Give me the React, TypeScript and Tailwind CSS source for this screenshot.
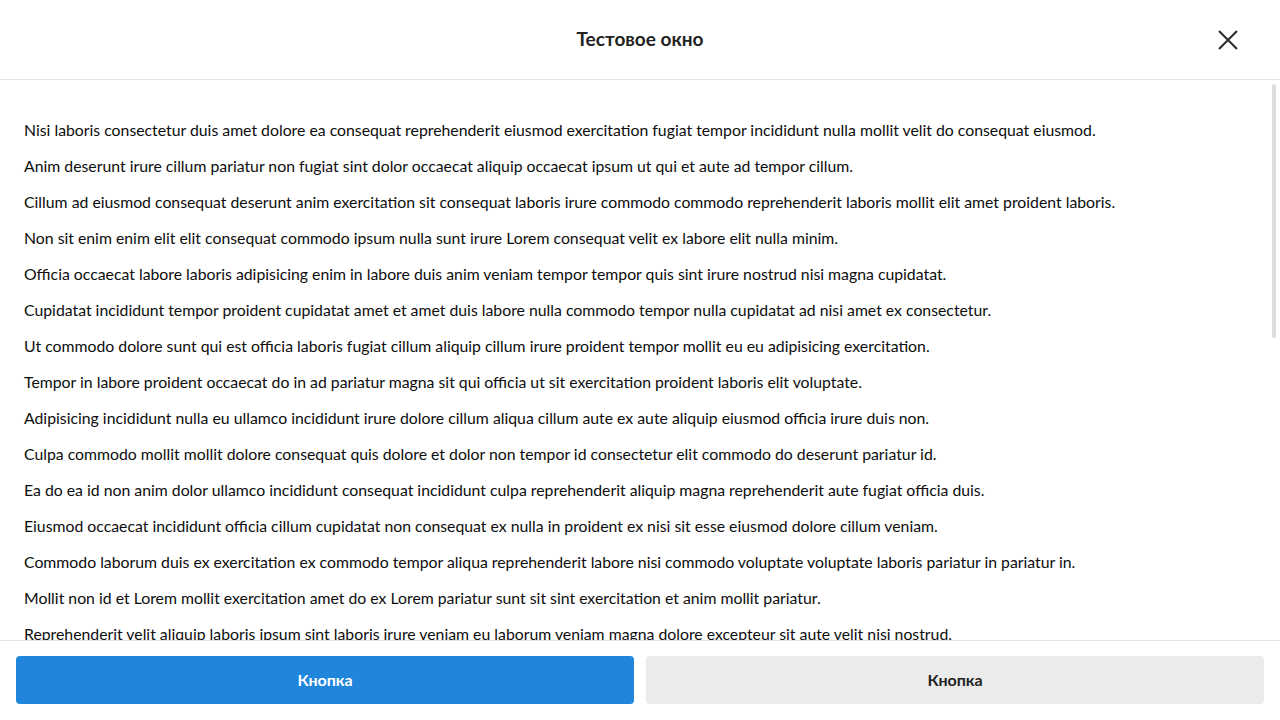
const lines = [
  'Nisi laboris consectetur duis amet dolore ea consequat reprehenderit eiusmod exercitation fugiat tempor incididunt nulla mollit velit do consequat eiusmod.',
  'Anim deserunt irure cillum pariatur non fugiat sint dolor occaecat aliquip occaecat ipsum ut qui et aute ad tempor cillum.',
  'Cillum ad eiusmod consequat deserunt anim exercitation sit consequat laboris irure commodo commodo reprehenderit laboris mollit elit amet proident laboris.',
  'Non sit enim enim elit elit consequat commodo ipsum nulla sunt irure Lorem consequat velit ex labore elit nulla minim.',
  'Officia occaecat labore laboris adipisicing enim in labore duis anim veniam tempor tempor quis sint irure nostrud nisi magna cupidatat.',
  'Cupidatat incididunt tempor proident cupidatat amet et amet duis labore nulla commodo tempor nulla cupidatat ad nisi amet ex consectetur.',
  'Ut commodo dolore sunt qui est officia laboris fugiat cillum aliquip cillum irure proident tempor mollit eu eu adipisicing exercitation.',
  'Tempor in labore proident occaecat do in ad pariatur magna sit qui officia ut sit exercitation proident laboris elit voluptate.',
  'Adipisicing incididunt nulla eu ullamco incididunt irure dolore cillum aliqua cillum aute ex aute aliquip eiusmod officia irure duis non.',
  'Culpa commodo mollit mollit dolore consequat quis dolore et dolor non tempor id consectetur elit commodo do deserunt pariatur id.',
  'Ea do ea id non anim dolor ullamco incididunt consequat incididunt culpa reprehenderit aliquip magna reprehenderit aute fugiat officia duis.',
  'Eiusmod occaecat incididunt officia cillum cupidatat non consequat ex nulla in proident ex nisi sit esse eiusmod dolore cillum veniam.',
  'Commodo laborum duis ex exercitation ex commodo tempor aliqua reprehenderit labore nisi commodo voluptate voluptate laboris pariatur in pariatur in.',
  'Mollit non id et Lorem mollit exercitation amet do ex Lorem pariatur sunt sit sint exercitation et anim mollit pariatur.',
  'Reprehenderit velit aliquip laboris ipsum sint laboris irure veniam eu laborum veniam magna dolore excepteur sit aute velit nisi nostrud.',
  'Sunt fugiat ullamco consectetur dolore officia esse nostrud aliquip labore elit deserunt irure do velit.',
  'Irure esse deserunt ipsum occaecat exercitation sint labore aute magna officia quis.',
];

export default function App() {
  return (
    <div className="flex h-[720px] w-[1280px] flex-col bg-white font-['Lato',sans-serif] text-[#0d0d0d]">
      {/* Header */}
      <div className="relative flex h-20 shrink-0 items-center justify-center border-b border-[#e3e3e3]">
        <h1 className="text-[19px] font-bold text-[#222]">Тестовое окно</h1>
        <button className="absolute right-[42px] top-[30px] flex h-5 w-5 items-center justify-center text-[#2a2a2a]">
          <svg width="20" height="20" viewBox="0 0 20 20" fill="none" stroke="currentColor" strokeWidth="2">
            <path d="M1 1L19 19M19 1L1 19" />
          </svg>
        </button>
      </div>

      {/* Body */}
      <div className="relative flex-1 overflow-hidden">
        <div className="flex flex-col gap-3 px-6 pt-[38px]">
          {lines.map((line, i) => (
            <p key={i} className="whitespace-nowrap text-[15.8px] leading-6">
              {line}
            </p>
          ))}
        </div>
        <div className="absolute right-[4px] top-[4px] h-[254px] w-[4px] rounded-full bg-[#dedede]" />
      </div>

      {/* Footer */}
      <div className="flex h-20 shrink-0 gap-3 border-t border-[#e3e3e3] px-4 pb-4 pt-[15px]">
        <button className="h-12 flex-1 rounded bg-[#1f86dc] text-[16px] font-bold text-white">Кнопка</button>
        <button className="h-12 flex-1 rounded bg-[#ebebeb] text-[16px] font-bold text-[#222]">Кнопка</button>
      </div>
    </div>
  );
}
